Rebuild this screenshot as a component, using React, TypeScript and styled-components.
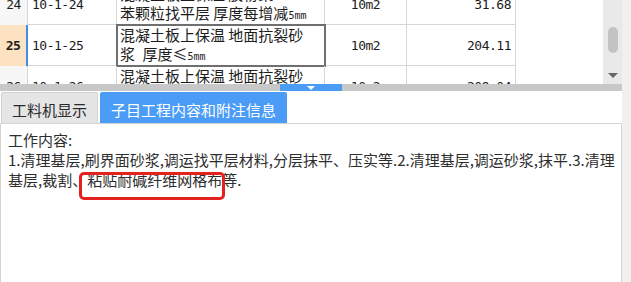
import React, { useLayoutEffect, useRef } from 'react';
import styled, { createGlobalStyle } from 'styled-components';

const GlobalStyle = createGlobalStyle`
  html, body {
    margin: 0;
    padding: 0;
    background: #fff;
  }
  body {
    width: 631px;
    height: 282px;
    overflow: hidden;
    font-family: "Noto Sans CJK SC", "Noto Sans", sans-serif;
    color: #222;
  }
`;

const Shell = styled.div`
  display: flex;
  width: 631px;
  height: 282px;
`;

const Main = styled.div`
  width: 622px;
  display: flex;
  flex-direction: column;
`;

const SideStrip = styled.div`
  flex: 1;
  background: #f0f0f0;
`;

const GridArea = styled.div`
  display: flex;
  height: 84px;
`;

const Viewport = styled.div`
  flex: 1;
  overflow: hidden;
  background: #fff;
`;

const Row = styled.div`
  display: grid;
  grid-template-columns: 28px 89px 208px 82px 109px;
  width: 516px;
  height: 41px;
  box-sizing: border-box;
  border-bottom: 1px solid #d6d6d6;
`;

const Cell = styled.div`
  box-sizing: border-box;
  border-right: 1px solid #d6d6d6;
  display: flex;
  align-items: center;
  font-family: "DejaVu Sans Mono", monospace;
  font-size: 13px;
  letter-spacing: -0.5px;
  color: #1c1c1c;
`;

const NumCell = styled(Cell)<{ $active?: boolean }>`
  justify-content: center;
  background: ${p => (p.$active ? '#fde2c2' : '#f7f7f7')};
  font-weight: ${p => (p.$active ? 700 : 400)};
  border-right: ${p => (p.$active ? '2px solid #3d8ef2' : '1px solid #d6d6d6')};
`;

const CodeCell = styled(Cell)`
  padding-left: 4px;
`;

const DescCell = styled(Cell)<{ $active?: boolean }>`
  flex-direction: column;
  align-items: flex-start;
  justify-content: center;
  padding-left: 3px;
  font-family: "Noto Sans CJK SC", sans-serif;
  font-size: 15px;
  letter-spacing: 0;
  line-height: 19px;
  outline: ${p => (p.$active ? '2px solid #6f6f6f' : 'none')};
  outline-offset: -1px;
`;

const DescLine = styled.div`
  white-space: pre;
`;

const Small = styled.span`
  font-family: "DejaVu Sans Mono", monospace;
  font-size: 10px;
`;

const UnitCell = styled(Cell)`
  justify-content: center;
`;

const PriceCell = styled(Cell)`
  justify-content: flex-end;
  padding-right: 4px;
`;

const VScroll = styled.div`
  width: 19px;
  background: #e9e9e9;
  display: flex;
  flex-direction: column;
  align-items: center;
  padding-top: 27px;
  box-sizing: border-box;
`;

const Thumb = styled.div`
  width: 10px;
  height: 26px;
  border-radius: 5px;
  background: #c3c3c3;
`;

const DownArrow = styled.div`
  margin-top: 20px;
  width: 0;
  height: 0;
  border-left: 5px solid transparent;
  border-right: 5px solid transparent;
  border-top: 5px solid #666;
`;

const Splitter = styled.div`
  height: 7px;
  background: #c8c8c8;
  display: flex;
  justify-content: center;
`;

const Handle = styled.div`
  width: 62px;
  background: #4a9cf5;
  display: flex;
  justify-content: center;
  align-items: center;
`;

const HandleArrow = styled.div`
  width: 0;
  height: 0;
  border-left: 4px solid transparent;
  border-right: 4px solid transparent;
  border-top: 4px solid #fff;
`;

const TabStrip = styled.div`
  display: flex;
  align-items: flex-end;
  gap: 2px;
  height: 32px;
  padding-left: 1px;
`;

const Tab = styled.div<{ $active?: boolean }>`
  box-sizing: border-box;
  height: 31px;
  font-size: 15px;
  line-height: 20px;
  white-space: nowrap;
  border-radius: 2px 2px 0 0;
  ${p =>
    p.$active
      ? `
    padding: 8px 11px 3px;
    background: #4a9cf6;
    color: #fff;
  `
      : `
    padding: 7px 10px 3px;
    background: #e5e5e5;
    color: #2a2a2a;
    border: 1px solid #d2d2d2;
    border-bottom: none;
  `}
`;

const Panel = styled.div`
  flex: 1;
  border: 1px solid #d4d4d4;
  border-bottom: none;
  padding: 6px 7px;
  font-size: 15px;
  line-height: 20px;
  color: #2e2e2e;
`;

const Line = styled.div`
  white-space: nowrap;
`;

const Mark = styled.span`
  position: relative;
  &::after {
    content: '';
    position: absolute;
    left: -8px;
    right: -3px;
    top: 3px;
    bottom: -10px;
    border: 3px solid #e5211d;
    border-radius: 5px;
  }
`;

interface Item {
  no: number;
  code: string;
  desc: React.ReactNode[];
  unit: string;
  price: string;
}

const items: Item[] = [
  {
    no: 24,
    code: '10-1-24',
    desc: ['混凝土板上保温 胶粉聚', <>苯颗粒找平层 厚度每增减<Small>5mm</Small></>],
    unit: '10m2',
    price: '31.68',
  },
  {
    no: 25,
    code: '10-1-25',
    desc: ['混凝土板上保温 地面抗裂砂', <>浆{'\u2002'}厚度≤<Small>5mm</Small></>],
    unit: '10m2',
    price: '204.11',
  },
  {
    no: 26,
    code: '10-1-26',
    desc: ['混凝土板上保温 地面抗裂砂', <>浆{'\u2002'}厚度每增减<Small>1mm</Small></>],
    unit: '10m2',
    price: '209.04',
  },
];

const ACTIVE = 25;

export default function App() {
  const viewRef = useRef<HTMLDivElement>(null);

  useLayoutEffect(() => {
    if (viewRef.current) viewRef.current.scrollTop = 16;
  }, []);

  return (
    <>
      <GlobalStyle />
      <Shell>
        <Main>
          <GridArea>
            <Viewport ref={viewRef}>
              {items.map(it => (
                <Row key={it.no}>
                  <NumCell $active={it.no === ACTIVE}>{it.no}</NumCell>
                  <CodeCell>{it.code}</CodeCell>
                  <DescCell $active={it.no === ACTIVE}>
                    {it.desc.map((d, i) => (
                      <DescLine key={i}>{d}</DescLine>
                    ))}
                  </DescCell>
                  <UnitCell>{it.unit}</UnitCell>
                  <PriceCell>{it.price}</PriceCell>
                </Row>
              ))}
              <Row />
            </Viewport>
            <VScroll>
              <Thumb />
              <DownArrow />
            </VScroll>
          </GridArea>
          <Splitter>
            <Handle>
              <HandleArrow />
            </Handle>
          </Splitter>
          <TabStrip>
            <Tab>工料机显示</Tab>
            <Tab $active>子目工程内容和附注信息</Tab>
          </TabStrip>
          <Panel>
            <Line>工作内容:</Line>
            <Line>1.清理基层,刷界面砂浆,调运找平层材料,分层抹平、压实等.2.清理基层,调运砂浆,抹平.3.清理</Line>
            <Line>
              基层,裁割、<Mark>粘贴耐碱纤维网格布</Mark>等.
            </Line>
          </Panel>
        </Main>
        <SideStrip />
      </Shell>
    </>
  );
}
